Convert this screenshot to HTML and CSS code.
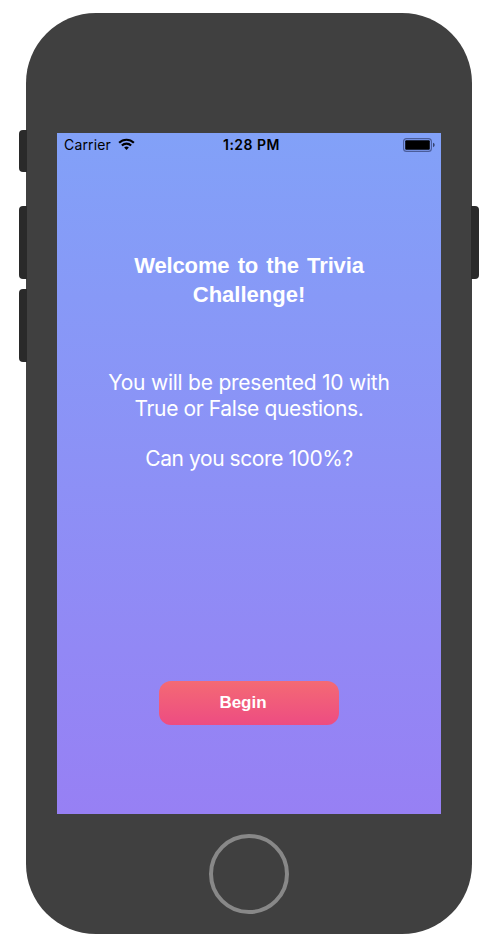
FILE: index.html
```html
<!DOCTYPE html>
<html lang="en">
<head>
<meta charset="utf-8">
<title>Trivia Challenge</title>
<link rel="stylesheet" href="styles.css">
</head>
<body>
<div class="phone">
  <span class="key key-mute"></span>
  <span class="key key-up"></span>
  <span class="key key-down"></span>
  <span class="key key-power"></span>
  <main class="screen">
    <header class="status">
      <div class="carrier">
        <span>Carrier</span>
        <svg class="wifi" viewBox="0 0 18 13" width="17" height="12.3">
          <g fill="none" stroke="#000" stroke-width="2.3">
            <path d="M1.2 5.1a11 11 0 0 1 15.6 0"/>
            <path d="M4.1 8a6.9 6.9 0 0 1 9.8 0"/>
          </g>
          <path d="M9 12.6 6.5 10.1a3.6 3.6 0 0 1 5 0z"/>
        </svg>
      </div>
      <span class="time">1:28 PM</span>
      <svg class="battery" viewBox="0 0 32 14" width="32" height="14">
        <rect x=".6" y=".6" width="27.8" height="12.8" rx="3" fill="none" stroke="#4a5c99" stroke-width="1.1"/>
        <rect x="2.2" y="2.2" width="24.6" height="9.6" rx="1"/>
        <path d="M30 4.8q1.7.6 1.7 2.2T30 9.2z" fill="#35436e"/>
      </svg>
    </header>
    <h1 class="title"><span>Welcome to the Trivia</span><br>Challenge!</h1>
    <p class="intro"><span class="lead">You will be presented 10 with</span><br>True or False questions.</p>
    <p class="question">Can you score 100%?</p>
    <button class="begin">Begin</button>
  </main>
  <div class="home"></div>
</div>
</body>
</html>
```
FILE: styles.css
```css
* { box-sizing: border-box; }
body { margin: 0; background: #fff; font-family: Inter, "Liberation Sans", sans-serif; }
.phone {
  position: relative;
  width: 446px;
  height: 921px;
  margin: 13px 0 0 26px;
  padding: 120px 31px 0;
  border-radius: 70px;
  background: #404040;
}
.key { position: absolute; left: -7px; width: 7.5px; background: #2a2a2a; border-radius: 4px 0 0 4px; }
.key-mute { top: 117px; height: 42px; }
.key-up { top: 193px; height: 73px; }
.key-down { top: 276px; height: 73px; }
.key-power { top: 193px; left: 445px; height: 73px; border-radius: 0 4px 4px 0; }
.screen {
  display: flex;
  flex-direction: column;
  align-items: center;
  width: 384px;
  height: 681px;
  background: linear-gradient(#82a1f8, #9780f4);
  color: #fff;
  text-align: center;
}
.status {
  display: grid;
  grid-template-columns: 1fr auto 1fr;
  align-items: center;
  width: 100%;
  height: 23px;
  padding: 0 6px 0 7px;
  color: #000;
  font-size: 14px;
}
.carrier { display: flex; align-items: center; gap: 7px; letter-spacing: .15px; }
.time { font-weight: 600; letter-spacing: .5px; padding-left: 4px; }
.battery { justify-self: end; }
.title {
  margin: 95px 0 0;
  font: bold 22px/29px "Liberation Sans", sans-serif;
}
.title span { word-spacing: 2.2px; letter-spacing: -.13px; }
.intro { margin: 61px 0 0; font-size: 21px; line-height: 26px; letter-spacing: -.38px; }
.lead { letter-spacing: -.24px; }
.question { margin: 24px 0 0; font-size: 21px; line-height: 26px; letter-spacing: -.42px; }
.begin {
  width: 180px;
  height: 44px;
  margin: 209px 0 0;
  padding: 0 12px 0 0;
  border: 0;
  border-radius: 12px;
  background: linear-gradient(#f46a74, #ed4c82);
  color: #fff;
  font: bold 17px "Liberation Sans", sans-serif;
}
.home { width: 80px; height: 80px; margin: 20px 0 0 152px; border: 4px solid #888; border-radius: 50%; }
```
